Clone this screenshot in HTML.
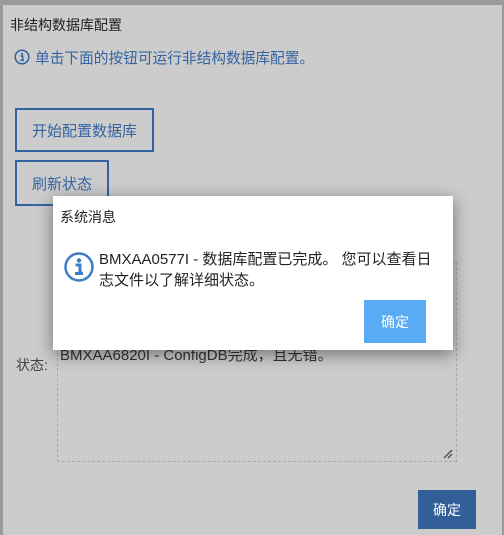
<!DOCTYPE html>
<html><head><meta charset="utf-8"><style>
*{margin:0;padding:0;box-sizing:border-box}
body{width:504px;height:535px;background:#9a9a9a;position:relative;overflow:hidden;font-family:"Liberation Sans","Noto Sans CJK SC",sans-serif;font-size:14px}
.dlg{position:absolute;left:3px;top:5px;width:499px;height:530px;background:#cccccc}
.a{position:absolute;white-space:nowrap}
.btn{position:absolute;border:2px solid #3464a0;color:#3464a0;font-size:15px;display:flex;align-items:center;justify-content:center}
.pop{position:absolute;left:53px;top:196px;width:400px;height:154px;background:#fff;box-shadow:0 4px 16px rgba(0,0,0,.45)}
</style></head><body>
<div class="dlg"></div>
<div class="a" style="left:10px;top:15px;color:#222;font-size:14px">非结构数据库配置</div>
<svg class="a" style="left:14px;top:49px" width="16" height="16" viewBox="0 0 16 16"><circle cx="8" cy="8" r="6.8" fill="none" stroke="#3464a0" stroke-width="1.5"/><circle cx="8" cy="4.8" r="1.1" fill="#3464a0"/><path d="M6.5 7h2.2v4.2h1M6.3 11.2h3.6" stroke="#3464a0" stroke-width="1.5" fill="none"/></svg>
<div class="a" style="left:35px;top:47px;color:#3464a0;font-size:14.7px">单击下面的按钮可运行非结构数据库配置。</div>
<div class="btn" style="left:15px;top:108px;width:139px;height:44px">开始配置数据库</div>
<div class="btn" style="left:15px;top:160px;width:94px;height:46px">刷新状态</div>
<div class="a" style="left:16px;top:355px;color:#444;font-size:14px">状态:</div>
<div class="a" style="left:57px;top:262px;width:400px;height:200px;border:1px dashed #aaa"></div>
<div class="a" style="left:60px;top:344px;color:#333;font-size:15px">BMXAA6820I - ConfigDB完成，且无错。</div>
<svg class="a" style="left:443px;top:449px" width="10" height="10"><path d="M1 9L9 1M5 9L9 5" stroke="#333" stroke-width="1.2"/></svg>
<div class="a" style="left:418px;top:490px;width:58px;height:39px;background:#335f99;color:#fff;display:flex;align-items:center;justify-content:center;font-size:14px">确定</div>
<div class="pop">
<div class="a" style="left:7px;top:11px;color:#222;font-size:14px">系统消息</div>
<svg class="a" style="left:10px;top:55px" width="32" height="32" viewBox="0 0 32 32"><circle cx="16" cy="16" r="13.5" fill="none" stroke="#3f7cc8" stroke-width="2.5"/><circle cx="16" cy="9.5" r="2.2" fill="#3f7cc8"/><path d="M12.5 14h4.5v8h2.5M12 22.5h8" stroke="#3f7cc8" stroke-width="3" fill="none"/></svg>
<div class="a" style="left:46px;top:53px;color:#222;font-size:15px;line-height:21px;width:340px;white-space:normal">BMXAA0577I - 数据库配置已完成。 您可以查看日志文件以了解详细状态。</div>
<div class="a" style="left:311px;top:104px;width:62px;height:43px;background:#5aabf5;color:#fff;display:flex;align-items:center;justify-content:center;font-size:14px">确定</div>
</div>
</body></html>
